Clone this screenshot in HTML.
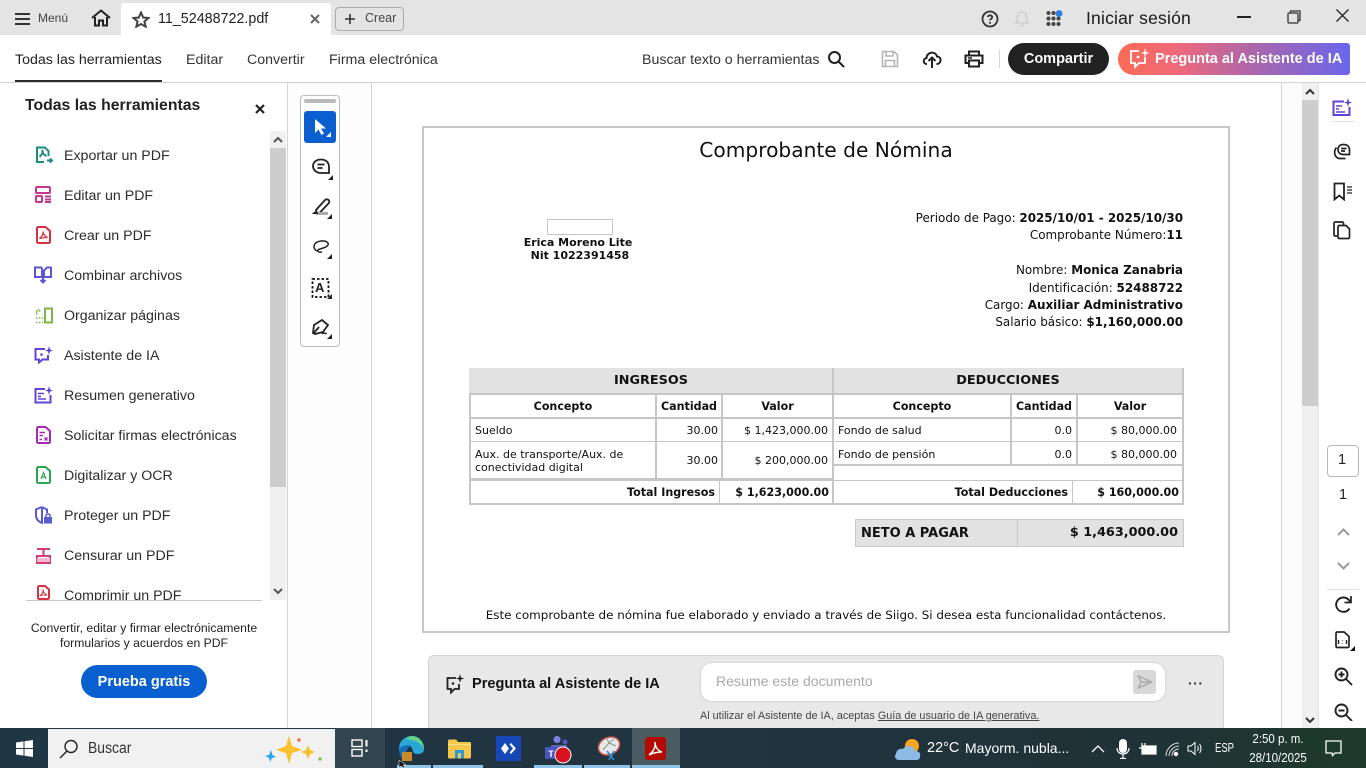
<!DOCTYPE html>
<html lang="es"><head><meta charset="utf-8"><title>11_52488722.pdf</title>
<style>
html,body{margin:0;padding:0;width:1366px;height:768px;overflow:hidden;background:#fff}
body{position:relative;font-family:"Liberation Sans",sans-serif;color:#222}
.a,.t,.d,svg{position:absolute}
.t{white-space:nowrap;line-height:1}
.d{white-space:nowrap;line-height:1;font-family:"DejaVu Sans",sans-serif;font-size:11px;color:#111}
.d.h{font-size:11.1px;font-weight:700}
.i{font-size:11.95px}
.r{text-align:right}.c{text-align:center}
b{font-weight:700}
.m{font-size:14.2px;left:64px;color:#2c2c2c}
.ln{position:absolute;background:#c6c6c6}
svg{fill:none}
.si{stroke-width:2}
</style></head><body>

<!-- top bar -->
<div class="a" style="left:0;top:0;width:1366px;height:35px;background:#e3e4e3"></div>
<div class="a" style="left:121px;top:3px;width:210px;height:32px;background:#fff;border-radius:3px 3px 0 0"></div>
<svg style="left:15px;top:12px" width="16" height="14" stroke="#333" stroke-width="2"><path d="M0 2H15M0 7H15M0 12H15"/></svg>
<div class="t" style="left:38px;top:12px;font-size:12px;color:#444">Menú</div>
<svg style="left:91px;top:9px" width="20" height="18" stroke="#222" stroke-width="2"><path d="M1 9L10 1.500L19 9M4 8V16.500H8V11.500H12V16.500H16V8"/></svg>
<svg style="left:132px;top:11px" width="18" height="17" stroke="#444" stroke-width="2"><path d="M9 1.500L11.200 6.500L16.500 7L12.400 10.500L13.700 15.700L9 13L4.300 15.700L5.600 10.500L1.500 7L6.800 6.500Z"/></svg>
<div class="t" style="left:158px;top:12px;font-size:14.300px;color:#222">11_52488722.pdf</div>
<svg style="left:310px;top:14px" width="10" height="10" stroke="#666" stroke-width="2"><path d="M1 1L9 9M9 1L1 9"/></svg>
<div class="a" style="left:335px;top:7px;width:67px;height:22px;border:1px solid #aaa;border-radius:4px"></div>
<svg style="left:344px;top:13px" width="12" height="12" stroke="#333" stroke-width="1.600"><path d="M6 1V11M1 6H11"/></svg>
<div class="t" style="left:365px;top:12px;font-size:12.500px;color:#444">Crear</div>

<svg style="left:981px;top:10px" width="18" height="18" stroke="#333" stroke-width="1.800"><circle cx="9" cy="9" r="7.500"/><path d="M6.800 7C7 4.800 11.200 4.800 11.200 7.200C11.200 8.800 9 8.800 9 10.500M9 12V13.800"/></svg>
<svg style="left:1014px;top:10px" width="16" height="18" stroke="#cfd0cf" stroke-width="1.600"><path d="M2 13C4 11 3 9 3.500 6.500C4 3.500 6 2 8 2S12 3.500 12.500 6.500C13 9 12 11 14 13ZM6 15.500H10"/></svg>
<svg style="left:1046px;top:10px" width="18" height="17"><g fill="#444"><circle cx="2.500" cy="3" r="2"/><circle cx="7.500" cy="3" r="2"/><circle cx="2.500" cy="8.500" r="2"/><circle cx="7.500" cy="8.500" r="2"/><circle cx="12.500" cy="8.500" r="2"/><circle cx="2.500" cy="14" r="2"/><circle cx="7.500" cy="14" r="2"/><circle cx="12.500" cy="14" r="2"/></g><circle cx="13" cy="3.500" r="3.400" fill="#2b7de0"/></svg>
<div class="t" style="left:1086px;top:10px;font-size:17.500px;color:#1a1a1a;letter-spacing:.2px">Iniciar sesión</div>
<div class="a" style="left:1237px;top:16px;width:14px;height:2px;background:#222"></div>
<svg style="left:1287px;top:10px" width="14" height="14" stroke="#333" stroke-width="1.300"><rect x="1" y="3" width="10" height="10" rx="1"/><path d="M3.500 3V1H13V10.500H11"/></svg>
<svg style="left:1336px;top:9px" width="13" height="13" stroke="#222" stroke-width="1.300"><path d="M.5.5L12.500 12.500M12.500.5L.5 12.500"/></svg>

<!-- second bar -->
<div class="a" style="left:0;top:82px;width:1366px;height:1px;background:#d0d0d0"></div>
<div class="t" style="left:15px;top:53px;font-size:14.200px">Todas las herramientas</div>
<div class="a" style="left:15px;top:80px;width:147px;height:2px;background:#2c2c2c"></div>
<div class="t" style="left:186px;top:53px;font-size:14.200px;color:#333">Editar</div>
<div class="t" style="left:247px;top:53px;font-size:14.200px;color:#333">Convertir</div>
<div class="t" style="left:329px;top:53px;font-size:14.200px;color:#333">Firma electrónica</div>
<div class="t" style="left:642px;top:53px;font-size:14.200px;color:#333">Buscar texto o herramientas</div>
<svg style="left:827px;top:50px" width="18" height="18" stroke="#222" stroke-width="2"><circle cx="7.500" cy="7.500" r="5.500"/><path d="M11.500 11.500L17 17"/></svg>
<svg style="left:881px;top:50px" width="18" height="18" stroke="#b5b5b5" stroke-width="1.600"><path d="M1.500 1.500H13L16.500 5V16.500H1.500ZM5 1.500V6H12V1.500M4.500 16.500V10.500H13.500V16.500"/></svg>
<svg style="left:922px;top:49px" width="20" height="20" stroke="#222" stroke-width="2"><path d="M5 15H4.500C1 15 .8 9.500 4.500 9C4.500 3 13.500 1.500 15 7.500C19.500 7.500 20 14.500 15 15H14.500M10 19V9M6.500 12L10 8.500L13.500 12"/></svg>
<svg style="left:964px;top:50px" width="20" height="18" stroke="#222" stroke-width="2"><path d="M5 5V1.500H15V5M5 13H1.500V5.500H18.500V13H15M5 10.500H15V16.500H5Z"/><path d="M4 8H8" stroke-width="1.500"/></svg>
<div class="a" style="left:999px;top:50px;width:1px;height:18px;background:#d6d6d6"></div>
<div class="a" style="left:1008px;top:43px;width:101px;height:32px;border-radius:16px;background:#222"></div>
<div class="t c" style="left:1008px;top:52px;width:101px;font-size:14.500px;font-weight:700;color:#fff">Compartir</div>
<div class="a" style="left:1118px;top:43px;width:232px;height:32px;border-radius:16px 3px 3px 16px;background:linear-gradient(90deg,#fb6a55 0%,#f0697a 25%,#a866ae 60%,#6a66ec 100%)"></div>
<svg style="left:1129px;top:47px" width="22" height="23" stroke="#fff" stroke-width="1.800"><path d="M10 4H2V16H6V20L10 16H16V10"/><path d="M16 1L17 5L20.500 6L17 7L16 10.500L15 7L12 6L15 5Z" fill="#fff" stroke="none"/><circle cx="9" cy="10" r="1.400" fill="#fff" stroke="none"/></svg>
<div class="t" style="left:1155px;top:52px;font-size:14.500px;font-weight:700;color:#fff">Pregunta al Asistente de IA</div>

<!-- left panel -->
<div class="t" style="left:25px;top:98px;font-size:15.800px;font-weight:700;color:#222">Todas las herramientas</div>
<svg style="left:255px;top:104px" width="10" height="10" stroke="#222" stroke-width="2.200"><path d="M1 1L9 9M9 1L1 9"/></svg>
<div class="t m" style="top:149px">Exportar un PDF</div>
<div class="t m" style="top:189px">Editar un PDF</div>
<div class="t m" style="top:229px">Crear un PDF</div>
<div class="t m" style="top:269px">Combinar archivos</div>
<div class="t m" style="top:309px">Organizar páginas</div>
<div class="t m" style="top:349px">Asistente de IA</div>
<div class="t m" style="top:389px">Resumen generativo</div>
<div class="t m" style="top:429px">Solicitar firmas electrónicas</div>
<div class="t m" style="top:469px">Digitalizar y OCR</div>
<div class="t m" style="top:509px">Proteger un PDF</div>
<div class="t m" style="top:549px">Censurar un PDF</div>
<div class="a" style="left:0;top:580px;width:262px;height:20px;overflow:hidden"><div class="t m" style="top:9px">Comprimir un PDF</div></div>
<div class="a" style="left:26px;top:600px;width:236px;height:1px;background:#c8c8c8"></div>

<svg class="si" style="left:35px;top:146px" width="18" height="18" stroke="#1f8a86" stroke-width="1.600"><path d="M9 16H2V1.500H10L13.500 5V10M12 14.500H17M15 12.500L17 14.500L15 16.500M4.500 11C7 8.500 8 6 7.500 4C7 6 8.500 9 11.500 10"/></svg>
<svg class="si" style="left:35px;top:186px" width="17" height="17" stroke="#c6358f" stroke-width="1.600"><rect x="1" y="1" width="14" height="6" rx="1"/><rect x="1" y="10" width="6" height="6" rx="1"/><path d="M10 10.500H16M10 13.500H16M10 16H16"/></svg>
<svg class="si" style="left:36px;top:226px" width="15" height="18" stroke="#d6323f" stroke-width="1.600"><path d="M1 2.500C1 1.500 1.500 1 2.500 1H9.500L14 5V15.500C14 16.500 13.500 17 12.500 17H2.500C1.500 17 1 16.500 1 15.500Z"/><path d="M3.500 12.500C6 10.500 7.500 8 7 5.500C7 8 9 10.500 11.500 11.500C9 11.500 6 12 3.500 12.500Z" stroke-width="1.300"/></svg>
<svg class="si" style="left:34px;top:266px" width="18" height="18" stroke="#5b55d6" stroke-width="1.600"><path d="M8 1.500H1V11H8V1.500M10 11H17V1.500H13L10 4.500V11M9 8V16.500M6.500 14L9 16.500L11.500 14"/></svg>
<svg style="left:35px;top:307px" width="18" height="17" stroke="#7ab648" stroke-width="1.600"><rect x="10" y="1.500" width="7" height="14" stroke-width="2"/><path d="M1 15.500H8M1 11H8M1 7H3M1 5.500L4 2.500M1 4H7" stroke-dasharray="1.500 1.500"/></svg>
<svg class="si" style="left:34px;top:346px" width="19" height="18" stroke="#5b46d8" stroke-width="1.900"><path d="M11 3H1.500V13.500H5V16.500L8.500 13.500H14V9"/><path d="M15 0L16 3.500L19 4.500L16 5.500L15 9L14 5.500L11 4.500L14 3.500Z" fill="#5b46d8" stroke="none"/><circle cx="7.500" cy="8.500" r="1.300" fill="#5b46d8" stroke="none"/></svg>
<svg class="si" style="left:34px;top:386px" width="19" height="18" stroke="#5b46d8" stroke-width="1.700"><path d="M11 3H1.500V16.500H16.500V9"/><path d="M4 7.500H10M4 10.500H7M4 13H12" stroke-width="1.500"/><path d="M15 0L16 3.500L19 4.500L16 5.500L15 9L14 5.500L11 4.500L14 3.500Z" fill="#5b46d8" stroke="none"/></svg>
<svg class="si" style="left:36px;top:426px" width="15" height="18" stroke="#a52bb4" stroke-width="1.700"><path d="M1 2.500C1 1.500 1.500 1 2.500 1H9.500L14 5V15.500C14 16.500 13.500 17 12.500 17H2.500C1.500 17 1 16.500 1 15.500Z"/><path d="M3.500 6.500H9M3.500 9.500H7M3.500 13.500H6M8.500 11.500L11.500 14.500M11.500 11.500L8.500 14.500" stroke-width="1.400"/></svg>
<svg class="si" style="left:36px;top:466px" width="15" height="18" stroke="#2da44e" stroke-width="1.600"><path d="M1 2.500C1 1.500 1.500 1 2.500 1H9.500L14 5V15.500C14 16.500 13.500 17 12.500 17H2.500C1.500 17 1 16.500 1 15.500Z"/><path d="M5 13L7.500 6.500L10 13M6 11H9" stroke-width="1.200"/></svg>
<svg class="si" style="left:35px;top:506px" width="18" height="18" stroke="#5a59cf" stroke-width="1.700"><path d="M6.500 1L1 3.500V9.500C1 13 3.500 15.500 7 17V1M6.500 1L12 3.500V7"/><rect x="9" y="11" width="8" height="6.500" fill="#5a59cf" stroke="none"/><path d="M11 11V9.500C11 7.500 15 7.500 15 9.500V11" stroke-width="1.400"/></svg>
<svg class="si" style="left:36px;top:547px" width="15" height="17" stroke="#d33b7c" stroke-width="1.700"><path d="M1 2H14M7.500 2V8M1 9H14V16H1Z"/><rect x="1" y="11" width="13" height="4" fill="#f3b9cf" stroke="none"/></svg>
<svg class="si" style="left:37px;top:585px" width="13" height="15" stroke="#d6323f" stroke-width="1.500"><path d="M1 2.500C1 1.500 1.500 1 2.500 1H8L12 4.500V12.500C12 13.500 11.500 14 10.500 14H2.500C1.500 14 1 13.500 1 12.500Z"/><path d="M3.500 10.500C5 9 6.500 7 6 4.500C6 7 7.500 9 10 10C7.500 10 5.500 10 3.500 10.500Z" stroke-width="1.100"/></svg>

<div class="a" style="left:270px;top:131px;width:16px;height:469px;background:#f0f0f0"></div>
<div class="a" style="left:270px;top:148px;width:16px;height:339px;background:#cdcdcd"></div>
<svg style="left:273px;top:136px" width="10" height="8" stroke="#555" stroke-width="2"><path d="M1 6L5 2L9 6"/></svg>
<svg style="left:273px;top:587px" width="10" height="8" stroke="#555" stroke-width="2"><path d="M1 2L5 6L9 2"/></svg>

<div class="t c" style="left:0;top:621px;width:288px;font-size:12.200px;line-height:15px;color:#222">Convertir, editar y firmar electrónicamente<br>formularios y acuerdos en PDF</div>
<div class="a" style="left:81px;top:665px;width:126px;height:33px;border-radius:17px;background:#0a5fd0"></div>
<div class="t c" style="left:81px;top:675px;width:126px;font-size:14.500px;font-weight:700;color:#fff">Prueba gratis</div>

<!-- vertical dividers / tool column -->
<div class="a" style="left:288px;top:83px;width:83px;height:645px;background:#fdfdfd"></div>
<div class="a" style="left:287px;top:83px;width:1px;height:645px;background:#d4d4d4"></div>
<div class="a" style="left:371px;top:83px;width:1px;height:645px;background:#d4d4d4"></div>
<div class="a" style="left:300px;top:95px;width:38px;height:250px;border:1px solid #bcbcbc;border-radius:4px;background:#fff"></div>
<div class="a" style="left:304px;top:99px;width:32px;height:4px;border-radius:2px;background:#b9b9b9"></div>
<div class="a" style="left:304px;top:111px;width:32px;height:32px;border-radius:3px;background:#0a5fd0"></div>
<svg style="left:313px;top:118px" width="20" height="22"><path d="M2 1V15L5.500 11.500L8.500 17L11 15.500L8 10.500H13Z" fill="#fff"/><path d="M18 14V19H13Z" fill="#fff"/></svg>
<svg style="left:311px;top:157px" width="23" height="24" stroke="#222" stroke-width="1.800"><path d="M10 2.500C5 2.500 2 5.500 2 9S5 16 10 16H18V10C18 5.500 15 2.500 10 2.500Z"/><path d="M6.500 7.500H13.500M6.500 11H11.500"/><path d="M22 18V23H17Z" fill="#222" stroke="none"/></svg>
<svg style="left:311px;top:197px" width="23" height="24"><path d="M5 13L14 3C15 2 17 2 18 3.500S18 6 17 7L8 16.500H6Z" stroke="#222" stroke-width="1.800"/><path d="M1 18C1 16 3 15 5 14L7 17H1Z" fill="#222"/><rect x="7" y="15" width="10" height="3" fill="#aaa"/><path d="M21 17V22H16Z" fill="#222"/></svg>
<svg style="left:311px;top:237px" width="23" height="24" stroke="#222" stroke-width="1.500"><path d="M6 14C1.500 12 1.500 5 10 4C15 3.500 18 5.500 17 8C15 11.500 9 11 7 13C6 14.500 8 15.500 11 15"/><path d="M21 17V22H16Z" fill="#222" stroke="none"/></svg>
<svg style="left:311px;top:277px" width="23" height="24" stroke="#111" stroke-width="1.800"><rect x="1.500" y="2" width="16" height="18" stroke-dasharray="2.500 2"/><path d="M21 17V22H16Z" fill="#222" stroke="none"/></svg>
<div class="t" style="left:315px;top:281px;font-size:13px;font-weight:700;color:#222">A</div>
<svg style="left:311px;top:317px" width="23" height="24" stroke="#222" stroke-width="1.800"><path d="M2 16L3 8L11 3L17 8L12 15L4 17Z"/><path d="M2 17L8 10"/><path d="M11 17C13 14 14 18 15.500 16" stroke-width="1.500"/><path d="M21 17V22H16Z" fill="#222" stroke="none"/></svg>

<!-- page -->
<div class="a" style="left:1281px;top:83px;width:21px;height:645px;background:#fbfbfb;border-left:1px solid #d4d4d4;box-sizing:border-box"></div>
<div class="a" style="left:422px;top:126px;width:804px;height:503px;border:2px solid #c8c8c8;background:#fff"></div>
<div class="t c" style="left:424px;top:140px;width:804px;font-family:'DejaVu Sans',sans-serif;font-size:20.200px;color:#111">Comprobante de Nómina</div>

<div class="a" style="left:547px;top:219px;width:64px;height:14px;border:1px solid #c6c6c6"></div>
<div class="d c" style="left:478px;top:237px;width:200px;font-weight:700">Erica Moreno Lite</div>
<div class="d c" style="left:478px;top:250px;width:200px;font-weight:700">&nbsp;Nit 1022391458</div>

<div class="d r i" style="right:183px;top:213px">Periodo de Pago: <b>2025/10/01 - 2025/10/30</b></div>
<div class="d r i" style="right:183px;top:230px">Comprobante Número:<b>11</b></div>
<div class="d r i" style="right:183px;top:265px">Nombre: <b>Monica Zanabria</b></div>
<div class="d r i" style="right:183px;top:283px">Identificación: <b>52488722</b></div>
<div class="d r i" style="right:183px;top:300px">Cargo: <b>Auxiliar Administrativo</b></div>
<div class="d r i" style="right:183px;top:317px">Salario básico: <b>$1,160,000.00</b></div>

<!-- tables -->
<div class="a" style="left:469px;top:368px;width:715px;height:25px;background:#e2e2e2"></div>
<div class="ln" style="left:469px;top:393px;width:2px;height:111px"></div>
<div class="ln" style="left:832px;top:368px;width:2px;height:136px"></div>
<div class="ln" style="left:1182px;top:368px;width:2px;height:136px"></div>
<div class="ln" style="left:469px;top:393px;width:715px;height:2px"></div>
<div class="ln" style="left:469px;top:417px;width:715px;height:2px"></div>
<div class="ln" style="left:469px;top:441px;width:364px;height:1px"></div>
<div class="ln" style="left:833px;top:441px;width:351px;height:1px"></div>
<div class="ln" style="left:469px;top:478px;width:364px;height:2px"></div>
<div class="ln" style="left:833px;top:464px;width:351px;height:2px"></div>
<div class="ln" style="left:469px;top:480px;width:715px;height:1px"></div>
<div class="ln" style="left:469px;top:503px;width:715px;height:2px"></div>
<div class="ln" style="left:655px;top:393px;width:2px;height:85px"></div>
<div class="ln" style="left:721px;top:393px;width:2px;height:85px"></div>
<div class="ln" style="left:1010px;top:393px;width:2px;height:71px"></div>
<div class="ln" style="left:1076px;top:393px;width:2px;height:71px"></div>
<div class="ln" style="left:719px;top:481px;width:1px;height:22px"></div>
<div class="ln" style="left:1072px;top:481px;width:1px;height:22px"></div>

<div class="d c" style="left:469px;top:375px;width:364px;font-weight:700;font-size:12.800px">INGRESOS</div>
<div class="d c" style="left:833px;top:375px;width:350px;font-weight:700;font-size:12.800px">DEDUCCIONES</div>
<div class="d c h" style="left:471px;top:401px;width:184px">Concepto</div>
<div class="d c h" style="left:657px;top:401px;width:64px">Cantidad</div>
<div class="d c h" style="left:723px;top:401px;width:109px">Valor</div>
<div class="d c h" style="left:834px;top:401px;width:176px">Concepto</div>
<div class="d c h" style="left:1012px;top:401px;width:64px">Cantidad</div>
<div class="d c h" style="left:1078px;top:401px;width:104px">Valor</div>

<div class="d" style="left:475px;top:425px">Sueldo</div>
<div class="d r" style="left:657px;top:425px;width:61px">30.00</div>
<div class="d r" style="left:723px;top:425px;width:105px">$ 1,423,000.00</div>
<div class="d" style="left:475px;top:449px">Aux. de transporte/Aux. de</div>
<div class="d" style="left:475px;top:462px">conectividad digital</div>
<div class="d r" style="left:657px;top:455px;width:61px">30.00</div>
<div class="d r" style="left:723px;top:455px;width:105px">$ 200,000.00</div>
<div class="d" style="left:838px;top:425px">Fondo de salud</div>
<div class="d r" style="left:1012px;top:425px;width:60px">0.0</div>
<div class="d r" style="left:1078px;top:425px;width:99px">$ 80,000.00</div>
<div class="d" style="left:838px;top:449px">Fondo de pensión</div>
<div class="d r" style="left:1012px;top:449px;width:60px">0.0</div>
<div class="d r" style="left:1078px;top:449px;width:99px">$ 80,000.00</div>
<div class="d r h" style="left:471px;top:487px;width:244px">Total Ingresos</div>
<div class="d r h" style="left:720px;top:487px;width:109px">$ 1,623,000.00</div>
<div class="d r h" style="left:834px;top:487px;width:234px">Total Deducciones</div>
<div class="d r h" style="left:1073px;top:487px;width:106px">$ 160,000.00</div>

<div class="a" style="left:855px;top:519px;width:327px;height:26px;background:#e2e2e2;border:1px solid #c8c8c8"></div>
<div class="ln" style="left:1017px;top:520px;width:1px;height:26px"></div>
<div class="d" style="left:861px;top:527px;font-weight:700;font-size:13px">NETO A PAGAR</div>
<div class="d r" style="left:1020px;top:527px;width:158px;font-weight:700;font-size:12.800px">$ 1,463,000.00</div>
<div class="d c" style="left:424px;top:610px;width:804px;font-size:11.930px">Este comprobante de nómina fue elaborado y enviado a través de Siigo. Si desea esta funcionalidad contáctenos.</div>

<!-- assistant card -->
<div class="a" style="left:428px;top:655px;width:796px;height:80px;background:#e8e8e8;border:1px solid #d4d4d4;border-radius:6px;box-sizing:border-box"></div>
<svg style="left:446px;top:674px" width="19" height="20" stroke="#222" stroke-width="1.800"><path d="M10 4H1.500V15H5V18.500L8.500 15H13V10"/><path d="M14 0L15 3.500L18.500 4.500L15 5.500L14 9L13 5.500L10 4.500L13 3.500Z" fill="#222" stroke="none"/><circle cx="7" cy="9.500" r="1.300" fill="#222" stroke="none"/></svg>
<div class="t" style="left:472px;top:677px;font-size:14.550px;font-weight:700;color:#111">Pregunta al Asistente de IA</div>
<div class="a" style="left:701px;top:663px;width:464px;height:38px;background:#fff;border-radius:11px;box-shadow:0 0 2px #bbb"></div>
<div class="t" style="left:716px;top:674px;font-size:14.100px;color:#a9a9a9">Resume este documento</div>
<div class="a" style="left:1133px;top:670px;width:23px;height:24px;background:#d8d8d8;border-radius:3px"></div>
<svg style="left:1137px;top:675px" width="16" height="14" stroke="#aaa" stroke-width="1.400"><path d="M1.500 1L14.500 7L1.500 13L4 7ZM4 7H14"/></svg>
<div class="t" style="left:1188px;top:676px;font-size:14px;color:#333;letter-spacing:.5px;font-weight:700">···</div>
<div class="t" style="left:700px;top:711px;font-size:10.850px;color:#444">Al utilizar el Asistente de IA, aceptas <span style="text-decoration:underline">Guía de usuario de IA generativa.</span></div>

<!-- right scrollbar -->
<div class="a" style="left:1302px;top:83px;width:16px;height:645px;background:#f0f0f0"></div>
<div class="a" style="left:1302px;top:100px;width:16px;height:306px;background:#cdcdcd"></div>
<svg style="left:1304px;top:88px" width="12" height="8" stroke="#333" stroke-width="2"><path d="M2 6L6 2L10 6"/></svg>
<svg style="left:1304px;top:716px" width="12" height="8" stroke="#333" stroke-width="2"><path d="M2 2L6 6L10 2"/></svg>
<div class="a" style="left:1318px;top:83px;width:1px;height:645px;background:#e2e2e2"></div>

<!-- right rail -->
<svg style="left:1332px;top:98px" width="20" height="19" stroke="#5b46d8" stroke-width="2"><path d="M12 3.500H1.500V17H17.500V9"/><path d="M4 8H10M4 11H7M4 14H13" stroke-width="1.500"/><path d="M16 0L17 3.500L20 4.500L17 5.500L16 9L15 5.500L12 4.500L15 3.500Z" fill="#5b46d8" stroke="none"/></svg>
<div class="a" style="left:1331px;top:121px;width:24px;height:1px;background:#e2e2e2"></div>
<svg style="left:1333px;top:142px" width="18" height="19" stroke="#222" stroke-width="1.700"><path d="M10.500 2.500C14 2.500 16.500 4.500 16.500 8V12.500H10.500C7 12.500 5 10.500 5 7.500S7 2.500 10.500 2.500ZM8 6.500H13.500M8 9H12"/><path d="M3.500 5.500C.500 9 1 15 6 16.500H12.500"/></svg>
<svg style="left:1333px;top:182px" width="20" height="19" stroke="#222" stroke-width="1.800"><path d="M1.500 1.500H11V17.500L6.250 13.500L1.500 17.500Z"/><path d="M14 5H19M14 8H19M14 11H19" stroke-width="1.300"/></svg>
<svg style="left:1333px;top:221px" width="18" height="19" stroke="#222" stroke-width="1.700"><path d="M4 15H2.500C1.500 15 1 14.500 1 13.500V2.500C1 1.500 1.500 1 2.500 1H9C10 1 10.500 1.500 10.500 2.500V4"/><path d="M5 6C5 5 5.500 4.500 6.500 4.500H13L16.500 8V16C16.500 17 16 17.500 15 17.500H6.500C5.500 17.500 5 17 5 16Z"/></svg>
<div class="a" style="left:1327px;top:445px;width:30px;height:30px;border:1px solid #b9b9b9;border-radius:4px"></div>
<div class="t c" style="left:1326px;top:453px;width:32px;font-size:14.500px;color:#222">1</div>
<div class="t c" style="left:1327px;top:488px;width:32px;font-size:14.500px;color:#222">1</div>
<svg style="left:1336px;top:527px" width="15" height="10" stroke="#9a9a9a" stroke-width="2"><path d="M2 8L7.500 2.500L13 8"/></svg>
<svg style="left:1336px;top:561px" width="15" height="10" stroke="#9a9a9a" stroke-width="2"><path d="M2 2L7.500 7.500L13 2"/></svg>
<div class="a" style="left:1327px;top:589px;width:32px;height:1px;background:#e2e2e2"></div>
<svg style="left:1334px;top:595px" width="19" height="19" stroke="#222" stroke-width="1.900"><path d="M15.500 13.500C13 18 5.500 18 3 13C.500 8 4 2.500 9.500 2.500C12.500 2.500 14.500 4 16 6.500"/><path d="M17 1V7.500H10.500" stroke-width="1.700"/></svg>
<svg style="left:1335px;top:631px" width="20" height="20" stroke="#222" stroke-width="1.700"><path d="M1 2.500C1 1.500 1.500 1 2.500 1H9L14 5.500V15C14 16 13.500 16.500 12.500 16.500H2.500C1.500 16.500 1 16 1 15Z"/><path d="M3.500 9V13M11.500 9V13M7.500 9.500V10M7.500 12V12.500" stroke-width="1.400"/><path d="M20 15V20H15Z" fill="#111" stroke="none"/></svg>
<svg style="left:1334px;top:667px" width="19" height="19" stroke="#222" stroke-width="1.900"><circle cx="7.500" cy="7.500" r="6"/><path d="M12 12L18 18M4.500 7.500H10.500M7.500 4.500V10.500"/></svg>
<svg style="left:1334px;top:703px" width="19" height="18" stroke="#222" stroke-width="1.900"><circle cx="7.500" cy="7.500" r="6"/><path d="M12 12L18 18M4.500 7.500H10.500"/></svg>

<!-- taskbar -->
<div class="a" style="left:0;top:728px;width:1366px;height:40px;background:linear-gradient(90deg,#1f3644 0%,#21343f 55%,#1f3236 85%,#1f3a2b 100%)"></div>
<svg style="left:16px;top:740px" width="17" height="17"><path d="M0 2.500L7.500 1.400V8H0ZM8.500 1.300L17 0V8H8.500ZM0 9H7.500V15.600L0 14.500ZM8.500 9H17V17L8.500 15.700Z" fill="#fff"/></svg>
<div class="a" style="left:48px;top:729px;width:287px;height:39px;background:#f1f1f1"></div>
<svg style="left:59px;top:739px" width="20" height="20" stroke="#222" stroke-width="1.400"><circle cx="12" cy="7.500" r="6"/><path d="M8 12L1 19"/></svg>
<div class="t" style="left:88px;top:741px;font-size:15.500px;color:#333;transform:scaleX(.9);transform-origin:0 0">Buscar</div>
<svg style="left:264px;top:735px" width="66" height="30"><path d="M25 1L28 11L38 15L28 18L25 29L22 18L12 15L22 11Z" fill="#fbc02d"/><path d="M44 10L46 15L51 17L46 19L44 24L42 19L37 17L42 15Z" fill="#fbc02d"/><path d="M7 15L8.500 20L12 22L8 23L6 27L5 23L1 21L5 20Z" fill="#2ba5ee"/><circle cx="35" cy="5" r="1.700" fill="#e8703a"/><circle cx="56" cy="24" r="1.800" fill="#8cc152"/></svg>
<div class="a" style="left:335px;top:728px;width:50px;height:40px;background:#33464f"></div>
<svg style="left:351px;top:739px" width="18" height="18" stroke="#fff" stroke-width="1.400"><rect x="1" y="1" width="10" height="6.500"/><rect x="1" y="10.500" width="10" height="6.500"/><path d="M15.500 1V7.500M15.500 10.500V13" stroke-width="2"/></svg>
<svg style="left:397px;top:735px" width="28" height="28"><path d="M2 14C2 5 9 1 15 1C21 1 27 6 27 14C27 18 24 19 20 19C14 19 17 13 13 11C8 9 4 12 2 14Z" fill="#29a8d8"/><path d="M12 5C18 5 24 8 27 14C27 6 21 1 15 1C13 1 11 2 9 3Z" fill="#5fd28e"/><path d="M2 14C2 22 6 26 10 26C8 22 8 15 13 11C8 9 4 12 2 14Z" fill="#1570b8"/></svg>
<div class="a" style="left:402px;top:752px;width:10px;height:9px;background:#c98a2b"></div>
<svg style="left:448px;top:738px" width="23" height="21"><path d="M0 3C0 2 .500 1.500 1.500 1.500H8L10 4H22C22.500 4 23 4.500 23 5V19C23 20 22.500 20.500 21.500 20.500H1.500C.500 20.500 0 20 0 19Z" fill="#f5c84c"/><path d="M0 6H23V7H0Z" fill="#fbe08a"/><rect x="7" y="12" width="9" height="8.500" fill="#2a9ad6"/><rect x="10" y="15" width="3" height="5.500" fill="#f5c84c"/></svg>
<div class="a" style="left:496px;top:736px;width:25px;height:25px;background:#1547b6"></div>
<svg style="left:501px;top:743px" width="15" height="11"><path d="M4 0L8 5.500L4 11L0 5.500Z" fill="#fff"/><path d="M10 0L15 5.500L10 11L8.500 9.500L12 5.500L8.500 1.500Z" fill="#fff"/></svg>
<svg style="left:544px;top:735px" width="30" height="29"><circle cx="13" cy="4.500" r="3.500" fill="#7b83eb"/><circle cx="21" cy="7" r="2.500" fill="#5059c9"/><path d="M7 10H23V21H7Z" fill="#6264a7"/><rect x="1" y="12" width="12" height="12" rx="1" fill="#4b53bc"/><text x="7" y="22" font-size="9" font-weight="700" fill="#fff" text-anchor="middle" font-family="Liberation Sans,sans-serif">T</text><circle cx="19" cy="20" r="8" fill="#d8121f" stroke="#fff" stroke-width="1"/></svg>
<svg style="left:595px;top:736px" width="26" height="26"><ellipse cx="14" cy="10" rx="11" ry="8.500" fill="#e8e8e8" transform="rotate(-25 14 10)" stroke="#c8554d" stroke-width="1.500"/><path d="M8 14L14 7L19 3M14 7L12 3M14 7L21 10" stroke="#7aa087" stroke-width="1"/><path d="M12 15L19 24M19 15L14 24" stroke="#2f8ec8" stroke-width="1.800"/></svg>
<div class="a" style="left:632px;top:728px;width:48px;height:40px;background:#4b5b62"></div>
<div class="a" style="left:645px;top:737px;width:21px;height:23px;border-radius:3px;background:#b30b00"></div>
<svg style="left:647px;top:740px" width="17" height="17" stroke="#fff" stroke-width="1.500"><path d="M2 15C6 12 9 7 8 2C8 7 11 11 15 12C11 12 6 13 2 15Z"/></svg>
<div class="a" style="left:397px;top:765px;width:34px;height:3px;background:#8fc4e8"></div>
<div class="a" style="left:433px;top:765px;width:50px;height:3px;background:#8fc4e8"></div>
<div class="a" style="left:534px;top:765px;width:48px;height:3px;background:#8fc4e8"></div>
<div class="a" style="left:584px;top:765px;width:46px;height:3px;background:#8fc4e8"></div>
<div class="a" style="left:632px;top:765px;width:48px;height:3px;background:#8fc4e8"></div>
<svg style="left:398px;top:760px" width="10" height="8"><path d="M1 0V8L3 6L6 8L7 7L5 5L8 5Z" fill="#111" stroke="#fff" stroke-width=".5"/></svg>

<svg style="left:894px;top:737px" width="28" height="25"><circle cx="18" cy="9" r="7" fill="#f5a623"/><path d="M5 23C1 23 0 19 2 17C2 13 6 11 9 12C12 7 21 9 21 14C25 14 27 16 26 20C26 22 24 23 22 23Z" fill="#8cbbe6"/></svg>
<div class="t" style="left:927px;top:741px;font-size:14.500px;color:#fff">22°C</div>
<div class="t" style="left:965px;top:741px;font-size:14px;color:#fff">Mayorm. nubla...</div>
<svg style="left:1091px;top:744px" width="14" height="9" stroke="#fff" stroke-width="1.300"><path d="M1 8L7 2L13 8"/></svg>
<svg style="left:1116px;top:739px" width="14" height="20"><rect x="3" y="0" width="8" height="14" rx="4" fill="#fff"/><path d="M1 9C1 17 13 17 13 9M7 15V19M4 19.500H10" stroke="#fff" stroke-width="1.200"/></svg>
<svg style="left:1139px;top:741px" width="18" height="15" stroke="#fff" stroke-width="1.200"><rect x="3" y="5" width="14" height="8" fill="#fff"/><path d="M0 7H3M3 2V5M6 2V5"/></svg>
<svg style="left:1165px;top:742px" width="15" height="15" stroke="#d8d8d8" stroke-width="1"><path d="M1 14C1 7 7 1 14 1M4 14C4 9 9 4 14 4M7 14C7 10 10 7 14 7"/><circle cx="11" cy="12" r="2.200" fill="#fff" stroke="none"/></svg>
<svg style="left:1187px;top:741px" width="16" height="15" stroke="#fff" stroke-width="1"><path d="M1 5H4L8 1.500V13.500L4 10H1Z"/><path d="M10.500 5C11.500 6.500 11.500 8.500 10.500 10M12.500 3C14.500 5.500 14.500 9.500 12.500 12"/></svg>
<div class="t" style="left:1215px;top:742px;font-size:12.500px;color:#fff;transform:scaleX(.76);transform-origin:0 0">ESP</div>
<div class="t c" style="left:1243px;top:733px;width:70px;font-size:12.500px;color:#fff;transform:scaleX(.92)">2:50 p. m.</div>
<div class="t c" style="left:1243px;top:752px;width:70px;font-size:12.500px;color:#fff;transform:scaleX(.92)">28/10/2025</div>
<svg style="left:1325px;top:740px" width="17" height="17" stroke="#fff" stroke-width="1.300"><path d="M1 1H16V13H10L7.500 15.500L7 13H1Z"/></svg>
</body></html>
